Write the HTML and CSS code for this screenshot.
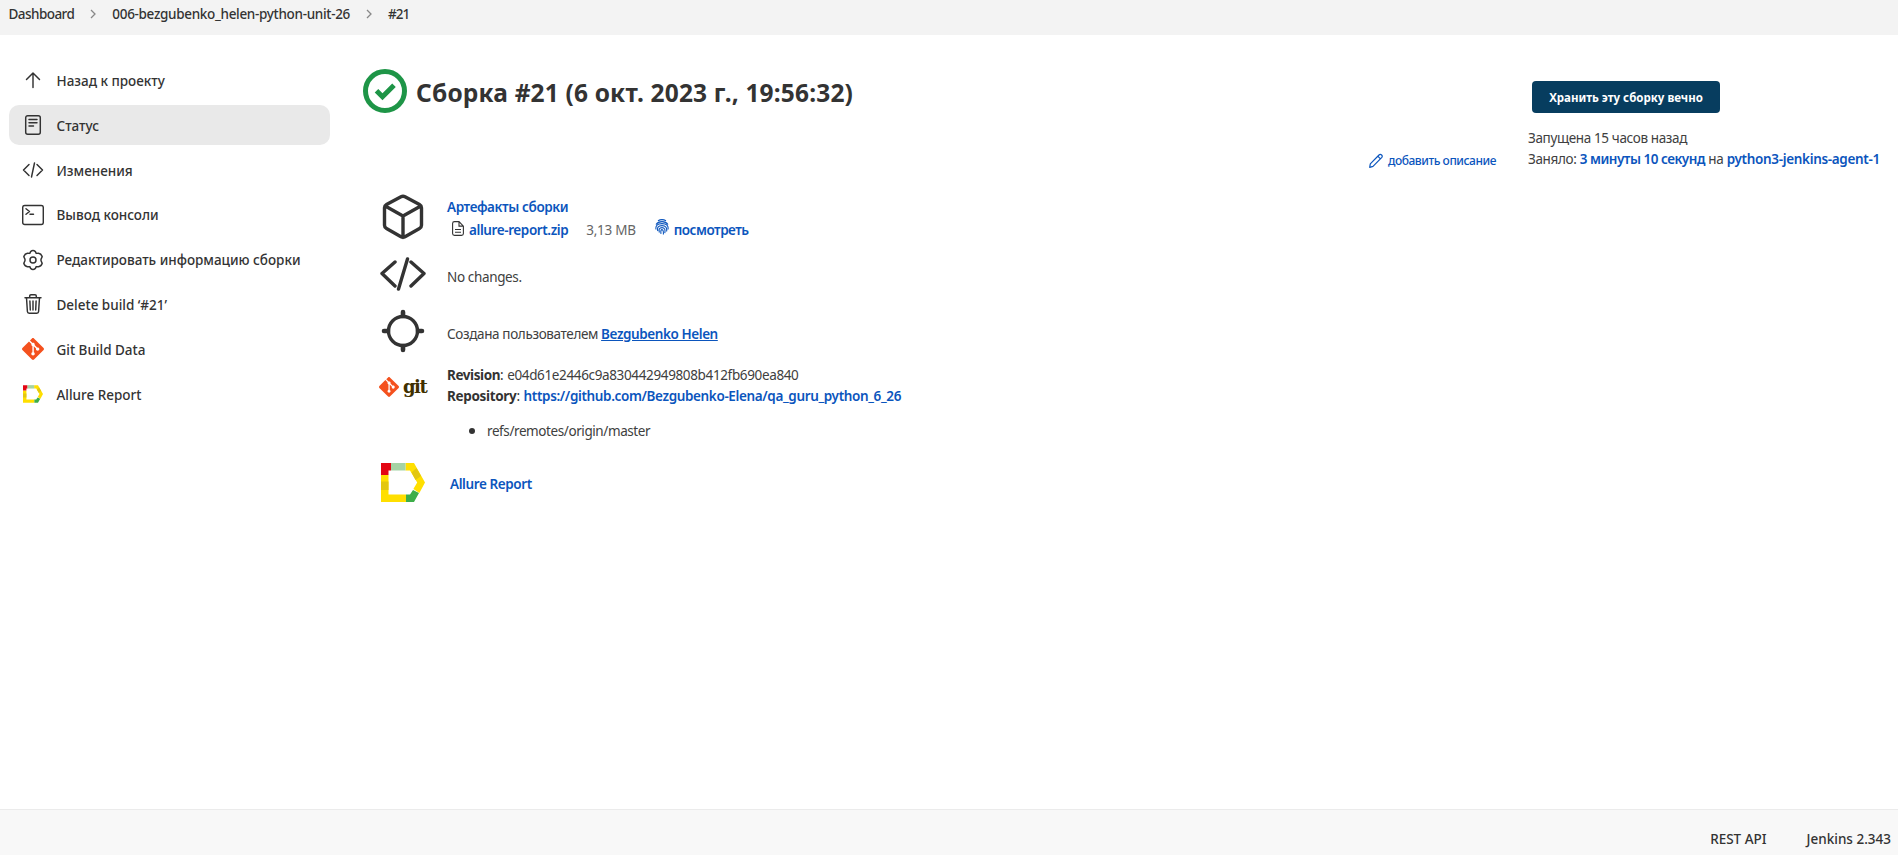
FILE: index.html
```
<!DOCTYPE html>
<html lang="ru">
<head>
<meta charset="utf-8">
<title>Сборка #21</title>
<link rel="stylesheet" href="styles.css">
</head>
<body>
<svg class="defs" aria-hidden="true">
  <symbol id="i-git" viewBox="0 0 24 24"><path d="M23.546 10.93L13.067.452c-.604-.603-1.582-.603-2.188 0L8.708 2.627l2.76 2.76c.645-.215 1.379-.07 1.889.441.516.515.658 1.258.438 1.9l2.658 2.66c.645-.223 1.387-.078 1.9.435.721.72.721 1.884 0 2.604-.719.719-1.881.719-2.6 0-.539-.541-.674-1.337-.404-1.996L12.86 8.955v6.525c.176.086.342.203.488.348.713.721.713 1.883 0 2.6-.719.721-1.889.721-2.609 0-.719-.719-.719-1.879 0-2.598.182-.18.387-.316.605-.406V8.835c-.217-.091-.424-.222-.6-.401-.545-.545-.676-1.342-.396-2.009L7.636 3.7.45 10.881c-.6.605-.6 1.584 0 2.189l10.48 10.477c.604.604 1.582.604 2.186 0l10.43-10.43c.605-.603.605-1.582 0-2.187"/></symbol>
  <symbol id="i-allure" viewBox="0 0 44 39">
    <path fill="#ffdf00" d="M0 12h7.500v19.500H25V39H0zM24.500 0H33l11 19.500-5.600 10.500-6-4 3.800-6.500L29 7.500h-4.500z"/>
    <path fill="#e30613" d="M0 0h10v7.500H7.500V12H0z"/>
    <path fill="#a5d3a4" d="M10 0h14.500v7.500H10z"/>
    <path fill="#e3c710" d="M0 18.500h7.500V27H0zM30.500 9.500l5-4.500 4.500 8-5.500 4z"/>
    <path fill="#3dae49" d="M25 31.500h4l3-4.500 6 3-5 9h-8z"/>
  </symbol>
  <symbol id="i-code" viewBox="0 0 46 34"><path d="M15 5L2 16.500 15 29M31 5l13 11.500L31 29M27.500 2L18.500 32"/></symbol>
</svg>
<nav class="crumbs">
  <span class="c1">Dashboard</span>
  <svg class="sep" viewBox="0 0 6 10"><path d="M1 1l4 4-4 4"/></svg>
  <span class="c2">006-bezgubenko_helen-python-unit-26</span>
  <svg class="sep" viewBox="0 0 6 10"><path d="M1 1l4 4-4 4"/></svg>
  <span class="c3">#21</span>
</nav>
<div class="page">
  <aside class="side">
    <a class="task"><svg class="ico line" viewBox="0 0 22 22"><path d="M11 18.500V4M4.500 10.500L11 4l6.500 6.500"/></svg><span>Назад к проекту</span></a>
    <a class="task active"><svg class="ico line" viewBox="0 0 22 22"><rect x="3.700" y="1.700" width="14.600" height="18.600" rx="2"/><path d="M7 5.500h8M7 8.700h8M7 12h4.500"/></svg><span>Статус</span></a>
    <a class="task"><svg class="ico line" viewBox="0 0 22 22"><path d="M7 5.500L1.500 11 7 16.500M15 5.500l5.500 5.500-5.500 5.500M12.500 4l-3 14"/></svg><span>Изменения</span></a>
    <a class="task"><svg class="ico line" viewBox="0 0 22 22"><rect x=".7" y="1.500" width="20.600" height="19" rx="2"/><path d="M4 4.700l3.500 2.800L4 10.200M8 10.200h3.500"/></svg><span>Вывод консоли</span></a>
    <a class="task"><svg class="ico line" viewBox="0 0 22 22"><circle cx="11" cy="11" r="3"/><path d="M8.600 2.600Q11 .4 13.400 2.600L14.200 4.400 16.500 4.300Q19.400 4.800 20.200 7.800L19.300 9.600Q18.600 11 19.300 12.400L20.200 14.200Q19.400 17.200 16.500 17.700L14.200 17.600 13.400 19.400Q11 21.600 8.600 19.400L7.800 17.600 5.500 17.700Q2.600 17.200 1.800 14.200L2.700 12.400Q3.400 11 2.700 9.600L1.800 7.800Q2.600 4.800 5.500 4.300L7.800 4.400z"/></svg><span>Редактировать информацию сборки</span></a>
    <a class="task"><svg class="ico line" viewBox="0 0 22 22"><path d="M3 4.700h16M4.500 4.700l.9 13.800q.1 1.800 1.800 1.800h7.600q1.700 0 1.800-1.800l.9-13.800M7.700 4.700V3q0-1.300 1.300-1.300h4q1.300 0 1.300 1.300v1.700M11 8v9M7.900 8l.4 9M14.100 8l-.4 9"/></svg><span>Delete build ‘#21’</span></a>
    <a class="task"><svg class="ico git"><use href="#i-git"/></svg><span>Git Build Data</span></a>
    <a class="task"><svg class="ico allure"><use href="#i-allure"/></svg><span>Allure Report</span></a>
  </aside>
  <main class="main">
    <h1><svg class="ok" viewBox="0 0 44 44"><circle cx="22" cy="22" r="19.500"/><path d="M13.500 21.800l6 6L31 16.200"/></svg><span>Сборка #21 (6 окт. 2023 г., 19:56:32)</span></h1>
    <div class="row artifacts">
      <svg class="big" viewBox="0 0 46 46"><path d="M21 2.800q2-1.100 4 0l14.500 7.700q2 1.100 2 3.300v17.500q0 2.200-2 3.300L25 42.800q-2 1.100-4 0L6.500 34.600q-2-1.100-2-3.300V13.800q0-2.200 2-3.300zM5.200 12L23 22l17.800-10M23 22v21.500"/></svg>
      <div class="body">
        <div><a class="link">Артефакты сборки</a></div>
        <div class="files">
          <svg class="doc" viewBox="0 0 12 15"><path d="M2.500.6h4.500l4.400 4.500v7.400q0 1.900-1.900 1.900h-7q-1.900 0-1.900-1.900v-10Q.6.600 2.500.6zM7 .8v4.300h4.200M3 8.500h6M3 11.200h6"/></svg>
          <a class="link">allure-report.zip</a><span class="size">3,13 MB</span>
          <svg class="print" viewBox="0 0 14 16"><path d="M3 1.800Q7-.6 11 1.800M1 5.500Q3 2.600 7 2.600T13 5.500M1 10.500Q0 4.600 7 4.600T13 10.500M2.800 12Q1.500 6.600 7 6.600T11.600 12.500M4.400 13.500Q3.200 8.600 7 8.600T9.800 14.200M6 14.800Q5.400 10.600 7 10.600T8.400 15.500"/></svg>
          <a class="link view">посмотреть</a>
        </div>
      </div>
    </div>
    <div class="row changes"><svg class="big code"><use href="#i-code"/></svg><div class="body"><span class="text">No changes.</span></div></div>
    <div class="row cause">
      <svg class="big" viewBox="0 0 46 46"><circle cx="23" cy="23" r="14.500"/><path class="tick" d="M23 4v4M23 38v4M4 23h4M38 23h4"/></svg>
      <div class="body"><span class="text">Создана пользователем</span><a class="link user">Bezgubenko Helen</a></div>
    </div>
    <div class="row scm">
      <div class="gitlogo"><svg class="git"><use href="#i-git"/></svg><span>git</span></div>
      <div class="body">
        <div class="ln"><strong>Revision</strong><span class="colon">:</span><span class="text">e04d61e2446c9a830442949808b412fb690ea840</span></div>
        <div class="ln"><strong class="repo">Repository</strong><span class="colon">:</span><a class="link url">https://github.com/Bezgubenko-Elena/qa_guru_python_6_26</a></div>
        <div class="ref"><i></i><span class="text">refs/remotes/origin/master</span></div>
      </div>
    </div>
    <div class="row report"><svg class="big-allure"><use href="#i-allure"/></svg><div class="body"><a class="link">Allure Report</a></div></div>
  </main>
  <div class="desc"><svg viewBox="0 0 14 15"><path d="M1.300 10.800L10 2q1.300-1.200 2.600 0t0 2.600L4 13.400l-3.300.9zM8.800 3.200l2.600 2.600"/></svg><a class="link">добавить описание</a></div>
  <section class="info">
    <button class="keep">Хранить эту сборку вечно</button>
    <div class="ln"><span class="text">Запущена 15 часов назад</span></div>
    <div class="ln took"><span class="text">Заняло:</span><a class="link duration">3 минуты 10 секунд</a><span class="text">на</span><a class="link agent">python3-jenkins-agent-1</a></div>
  </section>
</div>
<footer class="foot"><span>REST API</span><span>Jenkins 2.343</span></footer>
</body>
</html>
```
FILE: styles.css
```
* { box-sizing: border-box; }
body { margin: 0; height: 855px; display: flex; flex-direction: column; overflow: hidden; background: #fff; color: #333; font: 400 13.5px/21px "Noto Sans", "Open Sans", sans-serif; }
span, a, strong { white-space: nowrap; }
.defs { display: none; }

.crumbs { height: 35px; flex: none; background: #f3f3f3; display: flex; align-items: center; padding: 0 0 6px 8.5px; font-weight: 500; }
.sep { width: 6px; height: 10px; fill: none; stroke: #888; stroke-width: 1.3; margin: -1px 16px 0; flex: none; }
.c1 { letter-spacing: -.55px; }
.c2 { letter-spacing: -.32px; }
.c3 { letter-spacing: -.9px; }

.page { flex: 1; display: flex; align-items: flex-start; min-height: 0; }
.side { margin-left: 9px; width: 321px; flex: none; padding-top: 25px; display: flex; flex-direction: column; gap: 4.9px; font-weight: 500; }
.task { height: 40px; display: flex; align-items: center; gap: 12.5px; padding-left: 13px; border-radius: 10px; }
.task span { padding-top: 2.6px; letter-spacing: -.01px; }
.task.active { background: #e9e9e9; }
.ico { width: 22px; height: 22px; flex: none; }
.line { fill: none; stroke: #333; stroke-width: 1.45; stroke-linecap: round; stroke-linejoin: round; }
.git { fill: #f4511e; }
.allure { width: 20px; height: 18px; margin: 0 1px; }

.main { flex: none; width: 1039px; padding: 34px 0 0 33px; }
h1 { margin: 0; height: 44px; display: flex; align-items: center; gap: 9px; font-size: 24.5px; font-weight: 700; line-height: 44px; letter-spacing: .17px; }
h1 span { padding-top: 4px; }
.ok { width: 44px; height: 44px; fill: none; stroke: #1e9547; stroke-width: 5; }

.row { display: flex; align-items: flex-start; padding-left: 17px; }
.body { margin-left: 21px; }
.big { width: 46px; height: 46px; flex: none; fill: none; stroke: #333; stroke-width: 3.4; stroke-linecap: round; stroke-linejoin: round; }
.code { height: 34px; }
.tick { stroke-width: 4.6; }
.link { color: #0b55bd; font-weight: 600; letter-spacing: -.4px; }
.text { color: #404040; letter-spacing: -.36px; }
strong { letter-spacing: -.42px; }
.repo { letter-spacing: -.33px; }

.artifacts { margin-top: 81px; height: 63px; }
.artifacts .body { padding-top: 3px; }
.files { display: flex; height: 23px; align-items: center; padding: 2px 0 0 4px; }
.doc { width: 12px; height: 15px; fill: none; stroke: #333; stroke-width: 1.1; margin: -5px 5px 0 1px; }
.size { margin-left: 18px; color: #666; letter-spacing: -.28px; }
.print { width: 14px; height: 16px; fill: none; stroke: #0b55bd; stroke-width: 1.1; margin: -8px 5px 0 19px; }
.files .view { letter-spacing: -.48px; }
.changes { height: 50px; }
.changes .body { padding-top: 10px; }
.cause { height: 59px; padding-top: 1px; }
.cause .body { padding-top: 16px; display: flex; }
.cause .user { text-decoration: underline; margin-left: 3px; letter-spacing: -.42px; }
.scm { height: 97px; }
.scm .body { margin-top: -1px; }
.gitlogo { width: 46px; height: 42px; display: flex; align-items: center; gap: 4px; flex: none; }
.gitlogo svg { width: 20px; height: 20px; margin-left: -1px; flex: none; }
.gitlogo span { font: bold 18px/20px "DejaVu Serif", serif; color: #413000; letter-spacing: -1.5px; padding-bottom: 1px; }
.ln { display: flex; height: 21px; }
.colon { margin-right: 3.5px; }
.scm .url { letter-spacing: -.36px; }
.ref { display: flex; align-items: center; margin-top: 14px; padding-left: 22px; }
.ref i { width: 6px; height: 6px; border-radius: 50%; background: #333; margin: -2px 12px 0 0; }
.ref .text { letter-spacing: -.41px; }
.big-allure { width: 44px; height: 39px; flex: none; margin: 0 1px; }
.report .body { margin-left: 24px; padding-top: 11px; }

.desc { flex: none; width: 159px; padding-top: 115px; display: flex; align-items: center; gap: 5px; font-size: 12px; }
.desc .link { letter-spacing: -.46px; font-weight: 500; }
.desc svg { width: 14px; height: 15px; fill: none; stroke: #0b55bd; stroke-width: 1.2; stroke-linejoin: round; }

.info { padding-top: 46px; }
.keep { display: flex; align-items: center; justify-content: center; width: 188px; height: 32px; margin: 0 0 15px 4px; padding: 2px 0 0; border: 0; border-radius: 4px; background: #073d5f; color: #fff; font: 700 11.5px/20px "Noto Sans", sans-serif; }
.info .text { letter-spacing: -.36px; }
.took { gap: 3.4px; }
.took .duration { letter-spacing: -.5px; }
.took .agent { letter-spacing: -.33px; }

.foot { flex: none; height: 46px; background: #f8f8f8; border-top: 1px solid #ebebeb; display: flex; justify-content: flex-end; gap: 40px; padding: 19px 7px 0 0; font-weight: 500; }
```
